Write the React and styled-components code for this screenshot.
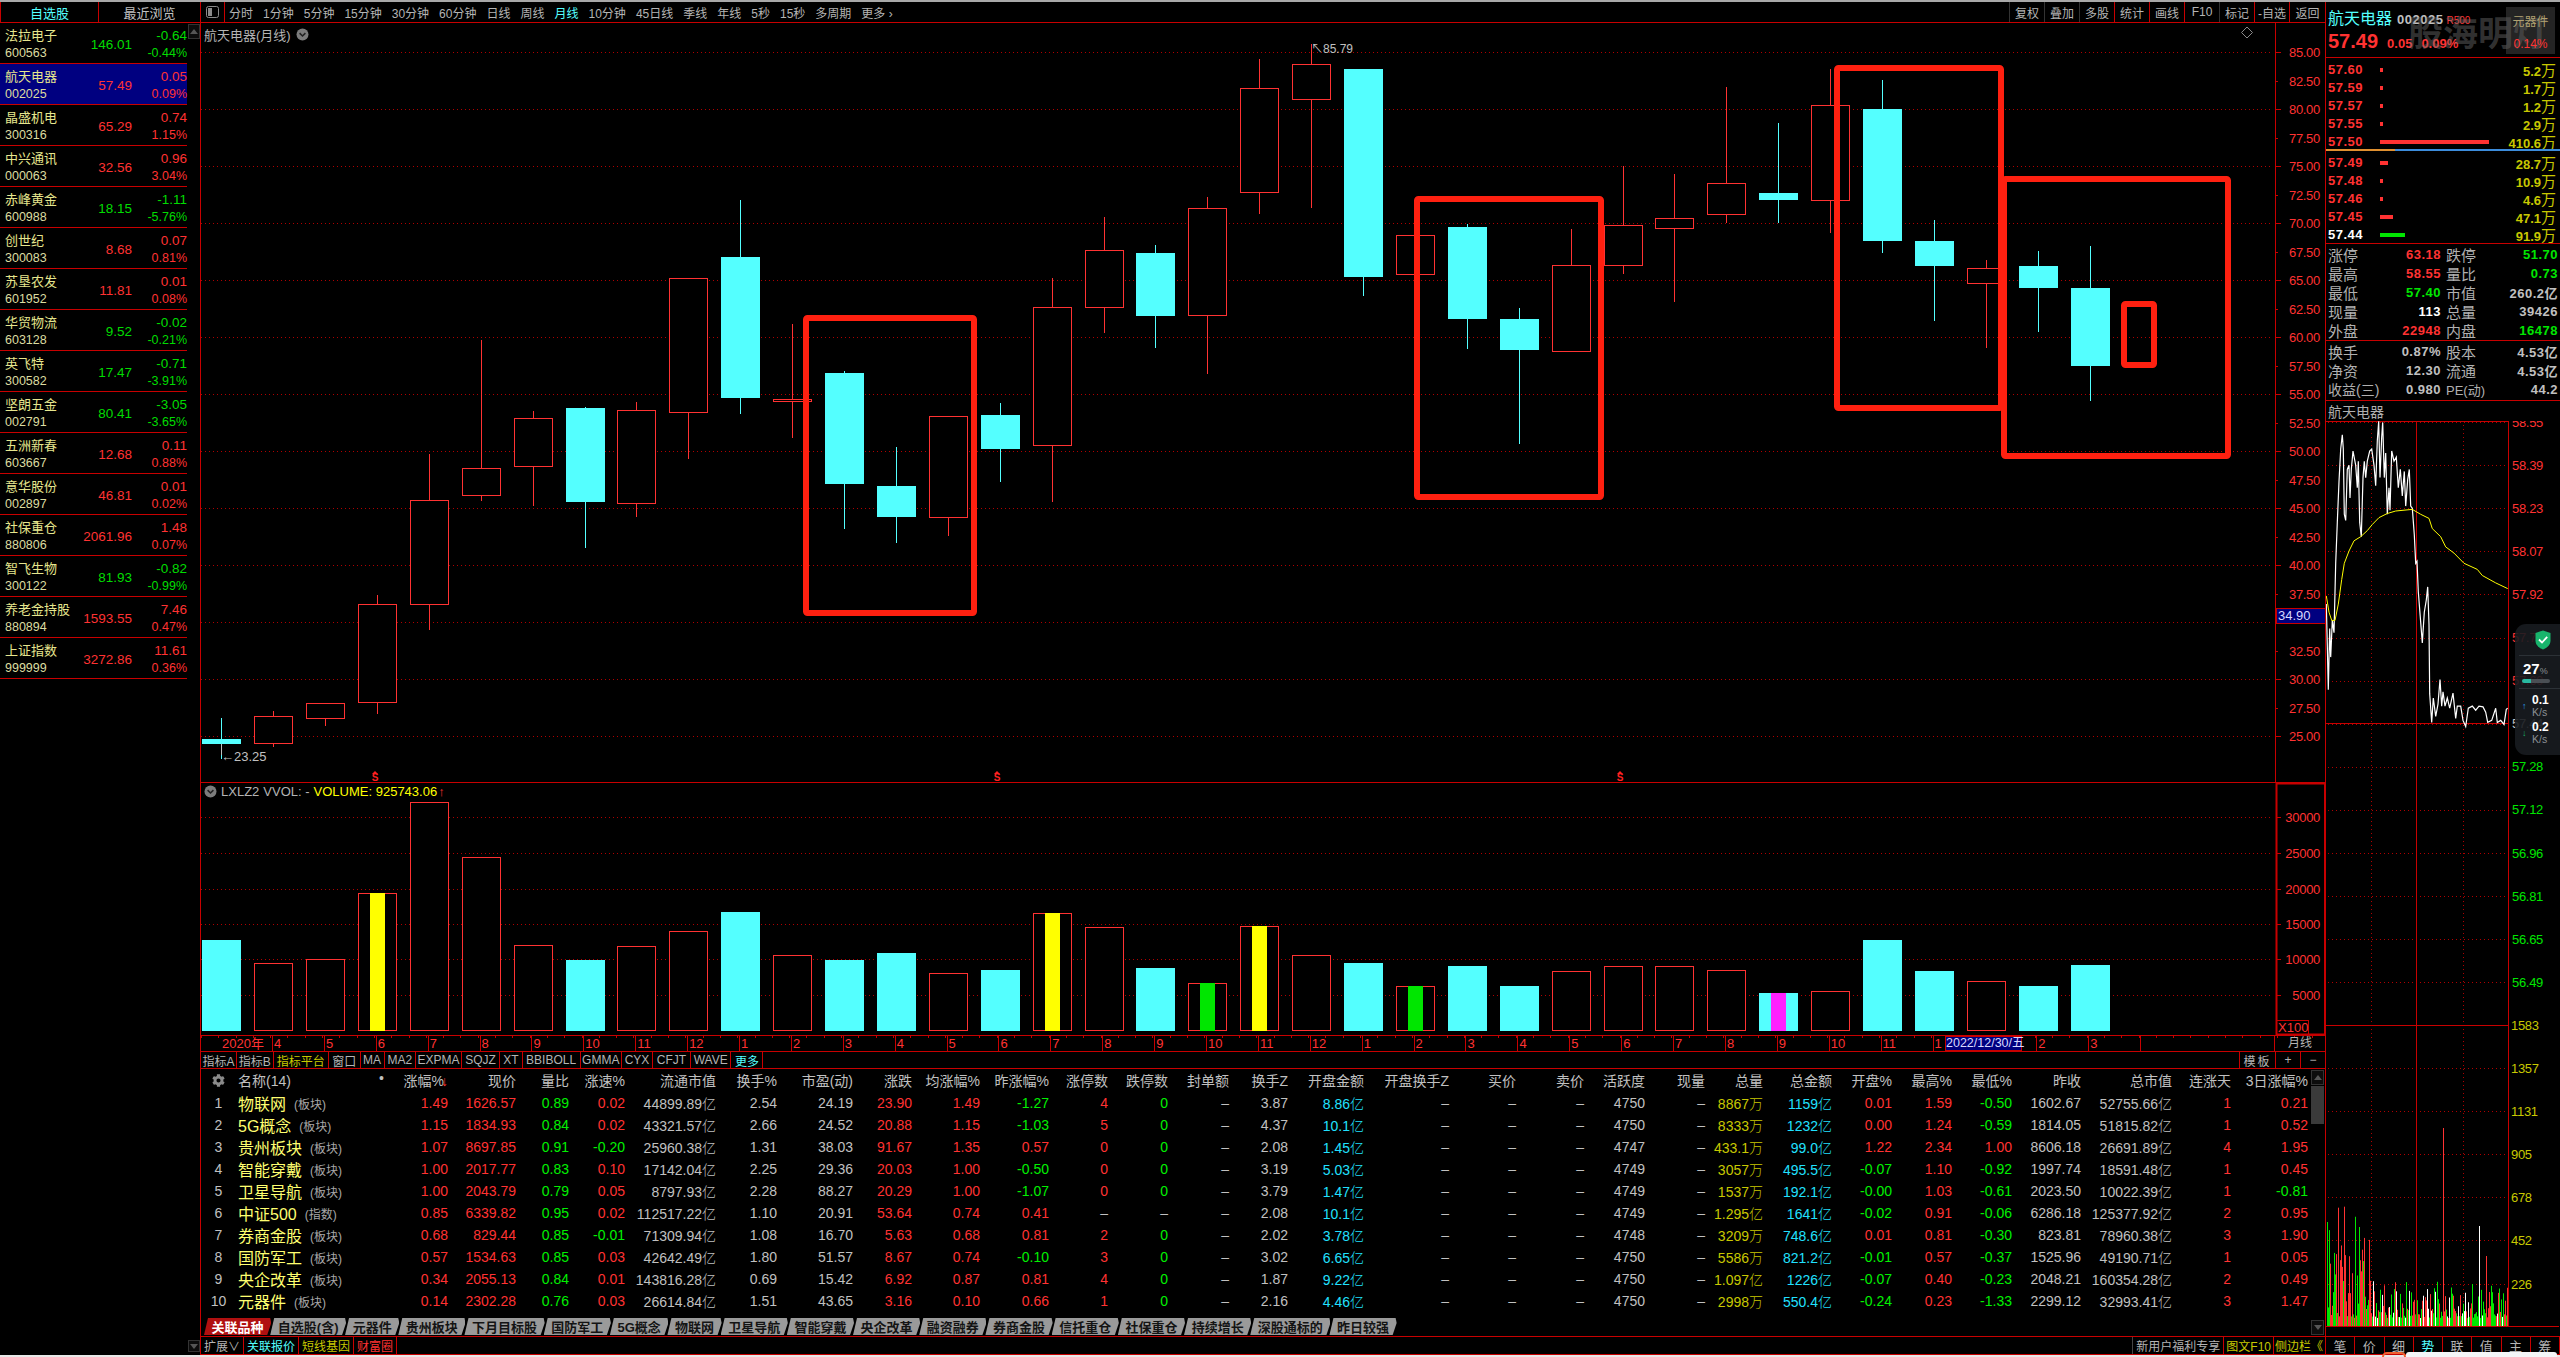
import React from "react";
import styled, { createGlobalStyle } from "styled-components";
import { FaCog } from "react-icons/fa";

const RED = "#ff3232";
const GREEN = "#00e600";
const CYAN = "#54ffff";
const LINE = "#c80000";
const GREY = "#c0c0c0";
const YELLOW = "#c8c800";
const DOT = "#b00000";

const FONT = `"Liberation Sans", "Noto Sans CJK SC", sans-serif`;

const GlobalStyle = createGlobalStyle`
  * { box-sizing: border-box; }
  html, body { margin: 0; padding: 0; background: #000; }
  body { font-family: ${FONT}; color: ${GREY}; }
`;

/* ---------- data ---------- */

const watchList = [
  ["法拉电子", "600563", "146.01", "-0.64", "-0.44%"],
  ["航天电器", "002025", "57.49", "0.05", "0.09%"],
  ["晶盛机电", "300316", "65.29", "0.74", "1.15%"],
  ["中兴通讯", "000063", "32.56", "0.96", "3.04%"],
  ["赤峰黄金", "600988", "18.15", "-1.11", "-5.76%"],
  ["创世纪", "300083", "8.68", "0.07", "0.81%"],
  ["苏垦农发", "601952", "11.81", "0.01", "0.08%"],
  ["华贸物流", "603128", "9.52", "-0.02", "-0.21%"],
  ["英飞特", "300582", "17.47", "-0.71", "-3.91%"],
  ["坚朗五金", "002791", "80.41", "-3.05", "-3.65%"],
  ["五洲新春", "603667", "12.68", "0.11", "0.88%"],
  ["意华股份", "002897", "46.81", "0.01", "0.02%"],
  ["社保重仓", "880806", "2061.96", "1.48", "0.07%"],
  ["智飞生物", "300122", "81.93", "-0.82", "-0.99%"],
  ["养老金持股", "880894", "1593.55", "7.46", "0.47%"],
  ["上证指数", "999999", "3272.86", "11.61", "0.36%"],
];

const periods = [
  ["分时"], ["1分钟"], ["5分钟"], ["15分钟"], ["30分钟"], ["60分钟"], ["日线"], ["周线"], ["月线", true],
  ["10分钟"], ["45日线"], ["季线"], ["年线"], ["5秒"], ["15秒"], ["多周期"], ["更多 ›"],
];

const topTools = [
  ["复权", "#333"], ["叠加", "#333"], ["多股", "#333"], ["统计", LINE], ["画线", LINE],
  ["F10", LINE], ["标记", "#333"], ["-自选", LINE], ["返回", LINE],
];

// wickTop, bodyTop, bodyBottom, wickBottom, falling (px from the top of the window)
const candles = [
  [718, 739, 744, 759, 1], [711, 716, 743, 747, 0], [703, 703, 718, 726, 0], [595, 604, 702, 714, 0],
  [454, 500, 604, 630, 0], [340, 468, 495, 501, 0], [411, 418, 466, 506, 0], [407, 408, 502, 548, 1],
  [402, 410, 503, 517, 0], [278, 278, 412, 459, 0], [200, 257, 398, 414, 1], [324, 399, 400, 438, 0],
  [371, 373, 484, 529, 1], [447, 486, 517, 543, 1], [416, 416, 517, 536, 0], [403, 415, 449, 482, 1],
  [278, 307, 445, 502, 0], [217, 250, 307, 333, 0], [245, 253, 316, 348, 1], [197, 208, 315, 374, 0],
  [59, 88, 192, 214, 0], [44, 64, 99, 208, 0], [69, 69, 277, 296, 1], [215, 235, 274, 332, 0],
  [224, 227, 319, 349, 1], [308, 319, 350, 444, 1], [229, 265, 351, 351, 0], [166, 225, 265, 274, 0],
  [174, 218, 228, 302, 0], [87, 183, 214, 223, 0], [123, 193, 200, 223, 1], [69, 105, 200, 233, 0],
  [80, 109, 241, 253, 1], [220, 241, 266, 321, 1], [260, 268, 283, 348, 0], [251, 266, 288, 332, 1],
  [246, 288, 366, 401, 1],
];

// top of each volume bar, inner colour where the bar carries one
const volumes = [
  [940], [963], [959], [893, "#ffff00"], [802], [857], [945], [960], [946], [931], [912], [955], [960], [953],
  [973], [970], [913, "#ffff00"], [927], [968], [983, "#00e600"], [926, "#ffff00"], [955], [963], [986, "#00e600"],
  [966], [986], [971], [966], [966], [970], [993, "#ff20ff"], [991], [940], [971], [981], [986], [965],
];

const marks = [
  { x: 803, y: 315, w: 174, h: 301 },
  { x: 1414, y: 196, w: 190, h: 304 },
  { x: 1834, y: 65, w: 170, h: 346 },
  { x: 2001, y: 176, w: 230, h: 283 },
  { x: 2121, y: 301, w: 36, h: 67 },
];

// the cursor label lies over the end of "12" and all of the "1" after it
const months = ["4", "5", "6", "7", "8", "9", "10", "11", "12", "1", "2", "3", "4", "5", "6", "7", "8", "9", "10", "11", "12", "1", "2", "3", "4", "5", "6", "7", "8", "9", "10", "11", "1", "", "2", "3"];

const indicatorTools = [
  ["指标A", 36], ["指标B", 36.5], ["指标平台", 55.5, YELLOW], ["窗口", 31.5], ["MA", 24], ["MA2", 31.5], ["EXPMA", 46],
  ["SQJZ", 38], ["XT", 22.6], ["BBIBOLL", 58], ["GMMA", 41.4], ["CYX", 31], ["CFJT", 38], ["WAVE", 40.5], ["更多", 32, CYAN],
];

const columns = [
  [53, "涨幅%", "signed"], [68, "现价", "red"], [53, "量比", "green"], [56, "涨速%", "signed"], [91, "流通市值", "grey"],
  [61, "换手%", "grey"], [76, "市盈(动)", "grey"], [59, "涨跌", "red"], [68, "均涨幅%", "signed"], [69, "昨涨幅%", "signed"],
  [59, "涨停数", "red"], [60, "跌停数", "green"], [61, "封单额", "grey"], [59, "换手Z", "grey"], [76, "开盘金额", "cyan"],
  [85, "开盘换手Z", "grey"], [67, "买价", "grey"], [68, "卖价", "grey"], [61, "活跃度", "grey"], [60, "现量", "grey"],
  [58, "总量", "yellow"], [69, "总金额", "cyan"], [60, "开盘%", "signed"], [60, "最高%", "signed"], [60, "最低%", "signed"],
  [69, "昨收", "grey"], [91, "总市值", "grey"], [59, "连涨天", "red"], [77, "3日涨幅%", "signed"],
];

const tableRows = [
  ["物联网", "(板块)", "1.49 1626.57 0.89 0.02 44899.89亿 2.54 24.19 23.90 1.49 -1.27 4 0 – 3.87 8.86亿 – – – 4750 – 8867万 1159亿 0.01 1.59 -0.50 1602.67 52755.66亿 1 0.21"],
  ["5G概念", "(板块)", "1.15 1834.93 0.84 0.02 43321.57亿 2.66 24.52 20.88 1.15 -1.03 5 0 – 4.37 10.1亿 – – – 4750 – 8333万 1232亿 0.00 1.24 -0.59 1814.05 51815.82亿 1 0.52"],
  ["贵州板块", "(板块)", "1.07 8697.85 0.91 -0.20 25960.38亿 1.31 38.03 91.67 1.35 0.57 0 0 – 2.08 1.45亿 – – – 4747 – 433.1万 99.0亿 1.22 2.34 1.00 8606.18 26691.89亿 4 1.95"],
  ["智能穿戴", "(板块)", "1.00 2017.77 0.83 0.10 17142.04亿 2.25 29.36 20.03 1.00 -0.50 0 0 – 3.19 5.03亿 – – – 4749 – 3057万 495.5亿 -0.07 1.10 -0.92 1997.74 18591.48亿 1 0.45"],
  ["卫星导航", "(板块)", "1.00 2043.79 0.79 0.05 8797.93亿 2.28 88.27 20.29 1.00 -1.07 0 0 – 3.79 1.47亿 – – – 4749 – 1537万 192.1亿 -0.00 1.03 -0.61 2023.50 10022.39亿 1 -0.81"],
  ["中证500", "(指数)", "0.85 6339.82 0.95 0.02 112517.22亿 1.10 20.91 53.64 0.74 0.41 – – – 2.08 10.1亿 – – – 4749 – 1.295亿 1641亿 -0.02 0.91 -0.06 6286.18 125377.92亿 2 0.95"],
  ["券商金股", "(板块)", "0.68 829.44 0.85 -0.01 71309.94亿 1.08 16.70 5.63 0.68 0.81 2 0 – 2.02 3.78亿 – – – 4748 – 3209万 748.6亿 0.01 0.81 -0.30 823.81 78960.38亿 3 1.90"],
  ["国防军工", "(板块)", "0.57 1534.63 0.85 0.03 42642.49亿 1.80 51.57 8.67 0.74 -0.10 3 0 – 3.02 6.65亿 – – – 4750 – 5586万 821.2亿 -0.01 0.57 -0.37 1525.96 49190.71亿 1 0.05"],
  ["央企改革", "(板块)", "0.34 2055.13 0.84 0.01 143816.28亿 0.69 15.42 6.92 0.87 0.81 4 0 – 1.87 9.22亿 – – – 4750 – 1.097亿 1226亿 -0.07 0.40 -0.23 2048.21 160354.28亿 2 0.49"],
  ["元器件", "(板块)", "0.14 2302.28 0.76 0.03 26614.84亿 1.51 43.65 3.16 0.10 0.66 1 0 – 2.16 4.46亿 – – – 4750 – 2998万 550.4亿 -0.24 0.23 -1.33 2299.12 32993.41亿 3 1.47"],
];

const sheetTabs = [
  "自选股(含)", "元器件", "贵州板块", "下月目标股", "国防军工", "5G概念", "物联网", "卫星导航", "智能穿戴", "央企改革",
  "融资融券", "券商金股", "信托重仓", "社保重仓", "持续增长", "深股通标的", "昨日较强",
];

const asks = [
  ["57.60", 3, "5.2"], ["57.59", 3, "1.7"], ["57.57", 3, "1.2"], ["57.55", 3, "2.9"], ["57.50", 109, "410.6"],
];
const bids = [
  ["57.49", 8, "28.7"], ["57.48", 3, "10.9"], ["57.46", 3, "4.6"], ["57.45", 13, "47.1"], ["57.44", 25, "91.9", true],
];

const stats = [
  ["涨停", "63.18", RED, "跌停", "51.70", GREEN],
  ["最高", "58.55", RED, "量比", "0.73", GREEN],
  ["最低", "57.40", GREEN, "市值", "260.2亿", GREY],
  ["现量", "113", "#fff", "总量", "39426", GREY],
  ["外盘", "22948", RED, "内盘", "16478", GREEN],
];
const info = [
  ["换手", "0.87%", "股本", "4.53亿"],
  ["净资", "12.30", "流通", "4.53亿"],
  ["收益(三)", "0.980", "PE(动)", "44.2"],
];

const intradayPrice = "262,500 265,600 268,710 272,560 275,630 280,540 285,570 290,400 295,300 300,200 305,120 310,85 313,120 316,280 320,295 325,170 330,160 333,240 337,170 342,125 350,160 355,215 358,150 362,300 367,335 372,190 376,150 380,190 385,150 392,125 398,120 405,160 410,210 415,100 419,52 423,190 428,90 431,55 436,190 440,130 445,280 450,215 453,270 458,125 465,150 472,140 478,215 484,170 490,235 496,175 500,260 506,195 511,170 515,260 520,265 526,330 530,400 534,395 538,470 545,545 550,595 556,520 562,490 566,458 570,550 572,720 578,790 583,730 590,775 597,745 603,685 608,750 612,715 618,750 625,730 632,755 642,718 650,780 655,750 665,750 672,785 680,800 688,755 700,750 710,760 720,750 732,752 740,765 746,790 758,785 770,755 775,790 785,785 795,795 802,758 806,755";
const intradayAverage = "262,480 270,520 278,540 288,540 298,500 308,440 316,400 330,370 345,345 365,335 385,320 400,305 420,288 445,278 470,272 495,270 520,268 545,280 570,290 580,315 605,335 620,360 645,375 675,400 715,415 730,430 770,448 806,462";

// the crop the two intraday traces were measured on was stretched 3 by 2.45
const toPagePoints = (points) =>
  points
    .split(" ")
    .map((p) => {
      const [x, y] = p.split(",").map(Number);
      return `${(2240 + x / 3).toFixed(1)},${(400 + y / 2.45).toFixed(1)}`;
    })
    .join(" ");

// pseudo random tick volumes, the same on every render
const tickVolumes = (() => {
  const bars = [];
  let seed = 17;
  for (let x = 2328; x < 2509; x += 1) {
    seed = (seed * 1103515245 + 12345) % 2147483648;
    const r = seed / 2147483648;
    seed = (seed * 1103515245 + 12345) % 2147483648;
    const pick = seed / 2147483648;
    const early = x < 2372 ? 1 : 0.45;
    const h = 8 + r * r * 82 * early + (x < 2360 ? r * 30 : 0);
    bars.push({ x, h, color: pick < 0.42 ? "#00e600" : pick < 0.78 ? RED : x > 2372 ? "#fff" : RED });
  }
  bars.push({ x: 2444, h: 198, color: RED }, { x: 2480, h: 100, color: "#fff" }, { x: 2360, h: 99, color: "#00e600" }, { x: 2328, h: 104, color: "#00e600" }, { x: 2417, h: 78, color: "#00e600" }, { x: 2487, h: 70, color: RED });
  return bars;
})();

const crisp = (v) => Math.round(v) + 0.5;
const candleX = (i) => 221.2 + i * 51.9;

/* ---------- shell ---------- */

const Page = styled.div`
  position: relative;
  width: 2560px;
  height: 1357px;
  overflow: hidden;
  background: #000;
  font-size: 12px;
`;

const TopStrip = styled.div`
  height: 2px;
  background: #a8a8a8;
`;

const BottomStrip = styled.div`
  height: 2px;
  background: #e8e8e8;
`;

const Columns = styled.div`
  display: flex;
  height: 1353px;
`;

/* ---------- watch list ---------- */

const LeftColumn = styled.div`
  flex: 0 0 200px;
  display: flex;
  flex-direction: column;
`;

const ListTabs = styled.div`
  display: flex;
  height: 21px;
  border-bottom: 1px solid ${LINE};
`;

const ListTab = styled.div`
  flex: ${(p) => (p.$on ? "0 0 99px" : "1")};
  display: flex;
  align-items: center;
  justify-content: center;
  font-size: 13px;
  color: ${(p) => (p.$on ? CYAN : GREY)};
  border-left: ${(p) => (p.$on ? `1px solid ${LINE}` : "none")};
  border-right: ${(p) => (p.$on ? `1px solid ${LINE}` : "none")};
`;

const ListBody = styled.div`
  flex: 1;
  display: flex;
`;

const ListRows = styled.div`
  flex: 0 0 186px;
`;

const Gutter = styled.div`
  flex: 1;
  display: flex;
  flex-direction: column;
  justify-content: space-between;
  padding: 1px 0 3px 1px;
`;

const ArrowButton = styled.div`
  display: flex;
  align-items: center;
  justify-content: center;
  height: ${(p) => p.$h || 15}px;
  border: 1px solid #333;
  background: #0c0c0c;
  &::after {
    content: "";
    border-left: 4px solid transparent;
    border-right: 4px solid transparent;
    border-${(p) => (p.$down ? "top" : "bottom")}: 5px solid #555;
  }
`;

const ListRow = styled.div`
  display: grid;
  grid-template-columns: 78px 49px 55px;
  height: 41px;
  padding-left: 5px;
  background: ${(p) => (p.$on ? "#000080" : "transparent")};
  border-bottom: 1px solid ${LINE};
`;

const NameStack = styled.div`
  display: flex;
  flex-direction: column;
  white-space: nowrap;
  padding-top: 3px;
`;

const StockName = styled.span`
  font-size: 13px;
  line-height: 19px;
  color: #e6e68e;
`;

const StockCode = styled.span`
  font-size: 12.5px;
  line-height: 17px;
  color: #dcdca0;
`;

const ListPrice = styled.div`
  display: flex;
  align-items: center;
  justify-content: flex-end;
  padding-top: 2px;
  font-size: 13.5px;
  white-space: nowrap;
  color: ${(p) => p.$color};
`;

const ChangeStack = styled.div`
  display: flex;
  flex-direction: column;
  align-items: flex-end;
  padding-top: 3px;
  color: ${(p) => p.$color};
`;

const ChangeValue = styled.span`
  font-size: 13.5px;
  line-height: 19px;
`;

const ChangePct = styled.span`
  font-size: 12.5px;
  line-height: 17px;
`;

/* ---------- centre ---------- */

const CenterColumn = styled.div`
  flex: 0 0 2126px;
  display: flex;
  flex-direction: column;
  border-left: 1px solid ${LINE};
  border-right: 1px solid ${LINE};
`;

const TopBar = styled.div`
  display: flex;
  align-items: center;
  height: 21px;
  border-bottom: 1px solid ${LINE};
`;

const PanelToggle = styled.div`
  flex: 0 0 24px;
  height: 100%;
  display: flex;
  align-items: center;
  justify-content: center;
  border-right: 1px solid ${LINE};
`;

const PeriodList = styled.div`
  display: flex;
  gap: 10px;
  padding-left: 4px;
  flex: 1;
`;

const Period = styled.span`
  white-space: nowrap;
  color: ${(p) => (p.$on ? CYAN : "#b4b4b4")};
`;

const ToolCell = styled.div`
  flex: 0 0 ${(p) => p.$w || 35}px;
  height: 100%;
  display: flex;
  align-items: center;
  justify-content: center;
  border-left: 1px solid ${(p) => p.$line};
  color: #b4b4b4;
  white-space: nowrap;
`;

const ChartPanel = styled.div`
  position: relative;
  height: ${(p) => p.$h}px;
  border-top: ${(p) => (p.$ruled ? `1px solid ${LINE}` : "none")};
`;

const ChartSvg = styled.svg`
  display: block;
  font-family: ${FONT};
`;

const ChartTitle = styled.div`
  position: absolute;
  left: 3px;
  top: ${(p) => p.$top}px;
  display: flex;
  align-items: center;
  gap: ${(p) => p.$gap || 5}px;
  font-size: 13px;
  color: #b4b4b4;
  white-space: nowrap;
`;

const LegendValue = styled.span`
  color: #ffff00;
`;

const LegendArrow = styled.span`
  margin-left: -3px;
  color: ${RED};
  font-weight: 700;
`;

const DateRow = styled.div`
  position: relative;
  display: flex;
  height: 16px;
  border-top: 1px solid ${LINE};
  background: repeating-linear-gradient(90deg, ${LINE} 0 1px, transparent 1px 17.3px) 0 0 / 100% 2px no-repeat;
`;

const DateCells = styled.div`
  flex: 1;
  display: flex;
  overflow: hidden;
`;

const DateCell = styled.div`
  flex: 0 0 ${(p) => p.$w}px;
  padding-left: ${(p) => p.$pad}px;
  font-size: 13px;
  line-height: 15px;
  color: ${RED};
  white-space: nowrap;
  border-right: 1px solid ${LINE};
`;

const PeriodCell = styled.div`
  flex: 0 0 51px;
  text-align: center;
  line-height: 15px;
  border-left: 1px solid ${LINE};
  color: #b4b4b4;
`;

const DateCursor = styled.div`
  position: absolute;
  left: 1744px;
  top: 0;
  width: 77px;
  height: 15px;
  background: #000080;
  border: 1px solid ${LINE};
  line-height: 13px;
  font-size: 12.5px;
  text-align: center;
  color: #d8d8ff;
  white-space: nowrap;
`;

const ToolsRow = styled.div`
  display: flex;
  height: 17px;
  border-top: 1px solid ${LINE};
`;

const ToolButton = styled.div`
  flex: 0 0 ${(p) => p.$w}px;
  display: flex;
  align-items: center;
  justify-content: center;
  white-space: nowrap;
  overflow: hidden;
  color: ${(p) => p.$color || "#b4b4b4"};
  border-right: 1px solid ${LINE};
`;

const ToolFill = styled.div`
  flex: 1;
`;

const TemplateCell = styled.div`
  flex: 0 0 ${(p) => p.$w}px;
  display: flex;
  align-items: center;
  justify-content: center;
  letter-spacing: ${(p) => p.$spread || 0}px;
  color: #b4b4b4;
  border-left: 1px solid ${LINE};
`;

/* ---------- table ---------- */

const TableArea = styled.div`
  display: flex;
  height: 268px;
  border-top: 1px solid ${LINE};
`;

const TableStack = styled.div`
  flex: 1;
  display: flex;
  flex-direction: column;
  min-width: 0;
`;

const TableBody = styled.div`
  flex: 1;
`;

const TableRow = styled.div`
  display: grid;
  grid-template-columns: 31px 163px ${columns.map((c) => `${c[0]}px`).join(" ")};
  height: 22px;
  align-items: center;
  font-size: 14px;
  white-space: nowrap;
`;

const HeadCell = styled.div`
  text-align: right;
  color: ${GREY};
`;

const GearCell = styled.div`
  display: flex;
  justify-content: center;
  color: #8a8a8a;
  font-size: 13px;
  padding-left: 4px;
`;

const NameHead = styled.div`
  display: flex;
  justify-content: space-between;
  padding: 0 11px 0 6px;
  color: ${GREY};
`;

const RowIndex = styled.div`
  text-align: center;
  padding-left: 4px;
  color: ${GREY};
`;

const SectorCell = styled.div`
  display: flex;
  align-items: center;
  gap: 8px;
  padding-left: 6px;
`;

const SectorName = styled.span`
  font-size: 16px;
  color: #ffff70;
`;

const SectorTag = styled.span`
  font-size: 12px;
  color: #a8a8a8;
`;

const cellColors = { red: RED, green: "#00f000", grey: GREY, cyan: "#20e0ff", yellow: YELLOW };

const DataCell = styled.div`
  text-align: right;
  color: ${(p) => p.$color};
`;

const Unit = styled.span`
  font-size: 14px;
  font-weight: 300;
`;

const ScrollBar = styled.div`
  flex: 0 0 17px;
  display: flex;
  flex-direction: column;
  padding: 1px 1px 1px 3px;
  gap: 1px;
`;

const ScrollTrack = styled.div`
  flex: 1;
`;

const ScrollThumb = styled.div`
  height: 38px;
  background: #3a3a3a;
`;

const SheetTabs = styled.div`
  display: flex;
  height: 18px;
  padding: 0 0 1px 3px;
  align-items: stretch;
`;

const SheetTab = styled.div`
  flex: none;
  display: flex;
  align-items: center;
  padding: 0 7.6px;
  margin-right: -1px;
  font-size: 13px;
  font-weight: 700;
  white-space: nowrap;
  background: ${(p) => (p.$on ? "#b01010" : "#9a9a9a")};
  color: ${(p) => (p.$on ? "#fff" : "#141414")};
  clip-path: polygon(4px 0, calc(100% - 1px) 0, 100% 30%, calc(100% - 4px) 100%, 0 100%);
`;

const BottomBar = styled.div`
  display: flex;
  align-items: stretch;
  height: 19px;
  border-top: 1px solid ${LINE};
  border-bottom: 1px solid ${LINE};
`;

const BottomItem = styled.div`
  display: flex;
  align-items: center;
  padding: 0 ${(p) => p.$pad ?? 3}px;
  white-space: nowrap;
  color: ${(p) => p.$color || "#b4b4b4"};
  border-right: 1px solid ${(p) => p.$line || LINE};
  border-left: ${(p) => (p.$ruleLeft ? `1px solid #444` : "none")};
`;

const BottomFill = styled.div`
  flex: 1;
`;

/* ---------- right column ---------- */

const RightColumn = styled.div`
  position: relative;
  flex: 1;
  display: flex;
  flex-direction: column;
  min-width: 0;
`;

const QuoteHead = styled.div`
  position: relative;
  height: 56px;
  padding: 3px 3px 0 2px;
  border-bottom: 1px solid ${LINE};
`;

const QuoteLine = styled.div`
  display: flex;
  align-items: baseline;
  height: ${(p) => p.$h}px;
  white-space: nowrap;
`;

const QuoteName = styled.span`
  font-size: 16px;
  color: ${CYAN};
  margin-right: 5px;
`;

const QuoteCode = styled.span`
  font-size: 13px;
  font-weight: 700;
  letter-spacing: 0.5px;
  color: ${GREY};
`;

const QuoteFlag = styled.span`
  margin-left: 3px;
  font-size: 10px;
  color: ${RED};
`;

const BigPrice = styled.span`
  font-size: 20px;
  font-weight: 700;
  color: ${RED};
  margin-right: 9px;
`;

const QuoteChange = styled.span`
  font-size: 13px;
  font-weight: 700;
  color: ${RED};
  margin-right: 9px;
`;

const WatermarkBox = styled.div`
  position: absolute;
  right: 5px;
  top: 5px;
  width: 49px;
  height: 47px;
  background: rgba(90, 90, 90, 0.4);
  text-align: center;
  color: #b0a070;
  padding-top: 5px;
`;

const WatermarkPct = styled.div`
  margin-top: 8px;
  font-size: 12px;
  color: ${RED};
`;

const Watermark = styled.div`
  position: absolute;
  left: 82px;
  top: 11px;
  font-size: 35px;
  line-height: 42px;
  font-weight: 700;
  color: rgba(120, 120, 120, 0.42);
  white-space: nowrap;
`;

const BookSection = styled.div`
  height: ${(p) => p.$h}px;
  padding-top: 1px;
  border-bottom: ${(p) => (p.$ruled ? `1px solid ${LINE}` : "none")};
`;

const BookRow = styled.div`
  display: grid;
  grid-template-columns: 52px 1fr auto;
  align-items: center;
  height: 18px;
  padding: 0 4px 0 2px;
`;

const BookPrice = styled.span`
  font-size: 13px;
  font-weight: 700;
  letter-spacing: 0.5px;
  color: ${(p) => (p.$white ? "#fff" : RED)};
`;

const BookBar = styled.span`
  display: block;
  height: 4px;
  background: ${(p) => (p.$white ? GREEN : RED)};
`;

const BookAmount = styled.span`
  font-size: 13px;
  font-weight: 700;
  color: ${YELLOW};
  white-space: nowrap;
`;

const BookUnit = styled.span`
  font-size: 15px;
  font-weight: 400;
  margin-left: 0;
`;

const BookDivider = styled.div`
  height: 2px;
  background: linear-gradient(90deg, #e09030 0 69px, #3c8cdc 69px);
`;

const StatSection = styled.div`
  height: ${(p) => p.$h}px;
  border-bottom: 1px solid ${LINE};
`;

const StatRow = styled.div`
  display: grid;
  grid-template-columns: 113px 1fr;
  column-gap: 5px;
  height: 19px;
  padding-left: 2px;
  padding-right: 2px;
`;

const StatPair = styled.div`
  display: flex;
  justify-content: space-between;
  align-items: center;
  white-space: nowrap;
`;

const StatLabel = styled.span`
  font-size: ${(p) => p.$size || 15}px;
  color: #b0b0b0;
`;

const StatValue = styled.span`
  font-size: 13px;
  font-weight: 700;
  letter-spacing: 0.5px;
  color: ${(p) => p.$color || GREY};
`;

const IntradayTitle = styled.div`
  height: 20px;
  padding-left: 2px;
  font-size: 14px;
  line-height: 22px;
  color: #b0b0b0;
`;

const SideTabs = styled.div`
  display: flex;
  height: 19px;
  border-top: 1px solid ${LINE};
  border-bottom: 1px solid ${LINE};
`;

const SideTab = styled.div`
  flex: 1;
  display: flex;
  align-items: center;
  justify-content: center;
  font-size: 13px;
  color: ${(p) => (p.$on ? CYAN : "#b4b4b4")};
  border-right: 1px solid ${LINE};
`;

/* ---------- floating monitor widget ---------- */

const Monitor = styled.div`
  position: absolute;
  left: 189px;
  top: 622px;
  width: 50px;
  height: 131px;
  border-radius: 11px 0 0 11px;
  background: rgba(24, 28, 32, 0.9);
  padding: 6px 2px 0 7px;
  color: #fff;
`;

const MonitorRule = styled.div`
  height: 1px;
  background: #2c3136;
  margin: ${(p) => p.$gap}px 0 0 -3px;
`;

const ShieldWrap = styled.div`
  display: flex;
  justify-content: center;
  height: 22px;
`;

const Percent = styled.div`
  margin: 6px 0 0 1px;
  font-size: 15px;
  line-height: 14px;
  font-weight: 700;
  white-space: nowrap;
`;

const PercentSign = styled.span`
  font-size: 9px;
  color: #8a8f94;
  font-weight: 400;
`;

const Meter = styled.div`
  height: 4px;
  width: 28px;
  margin-top: 1px;
  border-radius: 2px;
  background: linear-gradient(90deg, #28b8a0 0 9px, #4a4f54 9px);
`;

const SpeedRow = styled.div`
  display: grid;
  grid-template-columns: 10px 1fr;
  align-items: center;
  margin-top: ${(p) => p.$top}px;
`;

const SpeedArrow = styled.span`
  font-size: 9px;
  color: ${(p) => p.$color};
`;

const SpeedValue = styled.div`
  display: flex;
  flex-direction: column;
  font-size: 12px;
  line-height: 12px;
  font-weight: 700;
`;

const SpeedUnit = styled.span`
  font-weight: 400;
  font-size: 10.5px;
  color: #8a8f94;
`;

/* ---------- bits of page furniture ---------- */

const ToastArc = styled.div`
  position: absolute;
  right: 3px;
  bottom: 0;
  width: 151px;
  height: 5px;
  background: #f4f6f8;
  border-radius: 3px 3px 0 0;
`;

const ToastMark = styled.div`
  position: absolute;
  right: 154px;
  bottom: 0;
  width: 24px;
  height: 5px;
  border: 2px solid #f06030;
  border-bottom: none;
  border-radius: 12px 12px 0 0;
`;

const PanelIcon = ({ right }) => (
  <svg width="13" height="12" viewBox="0 0 13 12">
    <rect x="0.5" y="0.5" width="12" height="11" rx="2" fill="none" stroke="#8a8a8a" />
    <rect x={right ? 7 : 2} y="2" width="4" height="8" fill="#8a8a8a" />
  </svg>
);

const MenuDot = () => (
  <svg width="13" height="13" viewBox="0 0 13 13">
    <circle cx="6.5" cy="6.5" r="6" fill="#7c7c7c" />
    <path d="M3.6 5.2 6.5 8 9.4 5.2" fill="none" stroke="#222" strokeWidth="1.6" />
  </svg>
);

const Shield = () => (
  <svg width="16" height="20" viewBox="0 0 16 20">
    <path d="M8 0.5 15.5 3v7.5c0 4.2-3.2 7.4-7.5 9-4.3-1.6-7.5-4.8-7.5-9V3z" fill="#18b46c" />
    <path d="M4 9.5 7 12.5 12.2 6.8" fill="none" stroke="#fff" strokeWidth="1.8" />
  </svg>
);

/* ---------- charts ---------- */

const DottedRow = ({ y, x1 = 201, x2 = 2273 }) => (
  <line x1={x1} x2={x2} y1={crisp(y)} y2={crisp(y)} stroke={DOT} strokeDasharray="1 3" />
);

const AxisLabel = ({ y, children, color = RED, x = 2320, anchor = "end" }) => (
  <text x={x} y={y + 4.5} fill={color} fontSize="13" letterSpacing="-0.3" textAnchor={anchor}>
    {children}
  </text>
);

const Candle = ({ data, index }) => {
  const [wickTop, top, bottom, wickBottom, falling] = data;
  const cx = crisp(candleX(index));
  const color = falling ? CYAN : RED;
  return (
    <g>
      {wickTop < top && <line x1={cx} x2={cx} y1={wickTop} y2={top} stroke={color} />}
      {wickBottom > bottom && <line x1={cx} x2={cx} y1={bottom} y2={wickBottom} stroke={color} />}
      {falling ? (
        <rect x={cx - 19.5} y={top} width={39} height={Math.max(bottom - top, 1)} fill={CYAN} />
      ) : (
        <rect x={cx - 19} y={crisp(top)} width={38} height={Math.max(bottom - top, 2)} fill="#000" stroke={RED} />
      )}
    </g>
  );
};

const SignalMark = ({ x }) => (
  <g>
    <path d={`M${x - 3} 774 L${x} 771 L${x + 3} 774 Z`} fill="#ff2020" />
    <text x={x} y={781} fill="#ff2020" fontSize="10" fontWeight="700" textAnchor="middle">
      S
    </text>
  </g>
);

const PriceChart = () => {
  const axisY = (v) => 52.3 + ((85 - v) / 5) * 57;
  const major = Array.from({ length: 13 }, (_, i) => 85 - i * 5);
  const minor = major.slice(0, 12).map((v) => v - 2.5);
  return (
    <ChartSvg width="2124" height="759" viewBox="201 23 2124 759">
      {major.map((v) => (
        <DottedRow key={v} y={axisY(v)} />
      ))}
      {candles.map((c, i) => (
        <Candle key={i} data={c} index={i} />
      ))}
      <line x1={221.5} x2={221.5} y1={744} y2={755} stroke={GREY} />
      <text x={221} y={761} fill={GREY} fontSize="13">
        ←23.25
      </text>
      <text x={1311} y={53} fill={GREY} fontSize="12">
        ↖85.79
      </text>
      {marks.map((m) => (
        <rect key={m.x} x={m.x + 3} y={m.y + 3} width={m.w - 6} height={m.h - 6} rx="1.5" fill="none" stroke="#ff2010" strokeWidth="6" />
      ))}
      {[375, 997, 1620].map((x) => (
        <SignalMark key={x} x={x} />
      ))}
      <line x1={2275.5} x2={2275.5} y1={23} y2={782} stroke={LINE} />
      {major.map((v) => (
        <g key={v}>
          <line x1={2275} x2={2281} y1={crisp(axisY(v))} y2={crisp(axisY(v))} stroke={LINE} />
          {v !== 35 && <AxisLabel y={axisY(v)}>{v.toFixed(2)}</AxisLabel>}
        </g>
      ))}
      {minor.map((v) => (
        <g key={v}>
          <line x1={2275} x2={2278} y1={crisp(axisY(v))} y2={crisp(axisY(v))} stroke={LINE} />
          <AxisLabel y={axisY(v) + 1}>{v.toFixed(2)}</AxisLabel>
        </g>
      ))}
      <rect x={2276.5} y={608.5} width={49} height={15} fill="#000080" stroke={LINE} />
      <text x={2278} y={620} fill="#d8d8ff" fontSize="13">
        34.90
      </text>
      <path d="M2247 27 L2252.5 32.5 L2247 38 L2241.5 32.5 Z" fill="none" stroke="#8a8a8a" />
    </ChartSvg>
  );
};

const VolumeChart = () => {
  const levels = [
    [817, 30000],
    [853, 25000],
    [889, 20000],
    [924, 15000],
    [959, 10000],
    [995, 5000],
  ];
  return (
    <ChartSvg width="2124" height="252" viewBox="201 783 2124 252">
      {levels.map(([y]) => (
        <DottedRow key={y} y={y} />
      ))}
      {volumes.map(([top, inner], i) => {
        const cx = crisp(candleX(i));
        const falling = candles[i][4];
        return (
          <g key={i}>
            {falling ? (
              <rect x={cx - 19.5} y={top} width={39} height={1031 - top} fill={CYAN} />
            ) : (
              <rect x={cx - 19} y={crisp(top)} width={38} height={1030 - top} fill="#000" stroke={RED} />
            )}
            {inner && <rect x={cx - 7.5} y={top} width={15} height={1031 - top} fill={inner} />}
          </g>
        );
      })}
      <rect x={2276.5} y={783.5} width={48.5} height={251} fill="none" stroke={LINE} strokeWidth="2" />
      {levels.map(([y, v]) => (
        <g key={v}>
          <line x1={2276} x2={2281} y1={crisp(y)} y2={crisp(y)} stroke={LINE} />
          <AxisLabel y={y}>{v}</AxisLabel>
        </g>
      ))}
      <rect x={2276.5} y={1020.5} width={32} height={14} fill="none" stroke={LINE} />
      <text x={2278} y={1032} fill={RED} fontSize="13">
        X100
      </text>
    </ChartSvg>
  );
};

const IntradayChart = () => {
  const priceRows = [
    ["58.55", RED], ["58.39", RED], ["58.23", RED], ["58.07", RED], ["57.92", RED], ["57.76", RED], ["57.60", RED],
    ["57.44", GREY], ["57.28", GREEN], ["57.12", GREEN], ["56.96", GREEN], ["56.81", GREEN], ["56.65", GREEN], ["56.49", GREEN],
  ];
  const volumeRows = [["1357", 1068], ["1131", 1111], ["905", 1154], ["678", 1197], ["452", 1240], ["226", 1284]];
  return (
    <ChartSvg width="233" height="915" viewBox="2327 421 233 915">
      {priceRows.map(([label], i) => (
        <DottedRow key={label} y={422 + i * 43.1} x1={2329} x2={2509} />
      ))}
      {volumeRows.map(([label, y]) => (
        <DottedRow key={label} y={y} x1={2329} x2={2509} />
      ))}
      <line x1={2372.5} x2={2372.5} y1={421} y2={1326} stroke={DOT} strokeDasharray="1 3" />
      <line x1={2464.5} x2={2464.5} y1={421} y2={1326} stroke={DOT} strokeDasharray="1 3" />
      {tickVolumes.map((b, i) => (
        <line key={i} x1={b.x + 0.5} x2={b.x + 0.5} y1={1326 - b.h} y2={1326} stroke={b.color} />
      ))}
      <line x1={2417.5} x2={2417.5} y1={421} y2={1326} stroke={LINE} />
      <line x1={2327} x2={2509} y1={421.5} y2={421.5} stroke={LINE} />
      <line x1={2327} x2={2509} y1={723.5} y2={723.5} stroke={LINE} />
      <line x1={2327} x2={2509} y1={1025.5} y2={1025.5} stroke={LINE} />
      <line x1={2327} x2={2560} y1={1326.5} y2={1326.5} stroke={LINE} />
      <line x1={2509.5} x2={2509.5} y1={421} y2={1326} stroke={LINE} />
      <polyline points={toPagePoints(intradayPrice)} fill="none" stroke="#fff" strokeWidth="1.2" />
      <polyline points={toPagePoints(intradayAverage)} fill="none" stroke="#ffff00" strokeWidth="1" />
      {priceRows.map(([label, color], i) => (
        <AxisLabel key={label} y={422 + i * 43.1} color={color} x={2513} anchor="start">
          {label}
        </AxisLabel>
      ))}
      <AxisLabel y={1025} color={YELLOW} x={2512} anchor="start">
        1583
      </AxisLabel>
      {volumeRows.map(([label, y]) => (
        <AxisLabel key={label} y={y} color={YELLOW} x={2512} anchor="start">
          {label}
        </AxisLabel>
      ))}
    </ChartSvg>
  );
};

/* ---------- sections ---------- */

const WatchList = () => (
  <LeftColumn>
    <ListTabs>
      <ListTab $on>自选股</ListTab>
      <ListTab>最近浏览</ListTab>
    </ListTabs>
    <ListBody>
      <ListRows>
        {watchList.map(([name, code, price, change, pct]) => {
          const color = change.startsWith("-") ? "#00dc00" : RED;
          return (
            <ListRow key={code} $on={code === "002025"}>
              <NameStack>
                <StockName>{name}</StockName>
                <StockCode>{code}</StockCode>
              </NameStack>
              <ListPrice $color={color}>{price}</ListPrice>
              <ChangeStack $color={color}>
                <ChangeValue>{change}</ChangeValue>
                <ChangePct>{pct}</ChangePct>
              </ChangeStack>
            </ListRow>
          );
        })}
      </ListRows>
      <Gutter>
        <ArrowButton />
        <ArrowButton $down $h={12} />
      </Gutter>
    </ListBody>
  </LeftColumn>
);

const SectorTable = () => (
  <TableBody>
    <TableRow>
      <GearCell>
        <FaCog />
      </GearCell>
      <NameHead>
        <span>名称(14)</span>
        <span>•</span>
      </NameHead>
      {columns.map(([, label], i) => (
        <HeadCell key={label}>
          {label}
          {i === 0 && <LegendArrow>↓</LegendArrow>}
        </HeadCell>
      ))}
    </TableRow>
    {tableRows.map(([name, tag, values], r) => (
      <TableRow key={name}>
        <RowIndex>{r + 1}</RowIndex>
        <SectorCell>
          <SectorName>{name}</SectorName>
          <SectorTag>{tag}</SectorTag>
        </SectorCell>
        {values.split(" ").map((value, c) => {
          const kind = columns[c][2];
          const unit = /[亿万]$/.test(value) ? value.slice(-1) : "";
          let color = cellColors[kind] || (value.startsWith("-") ? "#00f000" : RED);
          if (value === "–") color = GREY;
          return (
            <DataCell key={c} $color={color}>
              {unit ? value.slice(0, -1) : value}
              {unit && <Unit>{unit}</Unit>}
            </DataCell>
          );
        })}
      </TableRow>
    ))}
  </TableBody>
);

const OrderRow = ({ price, size, amount, white }) => (
  <BookRow>
    <BookPrice $white={white}>{price}</BookPrice>
    <BookBar $white={white} style={{ width: size }} />
    <BookAmount>
      {amount}
      <BookUnit>万</BookUnit>
    </BookAmount>
  </BookRow>
);

const QuotePanel = () => (
  <RightColumn>
    <QuoteHead>
      <Watermark>股海明灯</Watermark>
      <QuoteLine $h={25}>
        <QuoteName>航天电器</QuoteName>
        <QuoteCode>002025</QuoteCode>
        <QuoteFlag>R500</QuoteFlag>
      </QuoteLine>
      <QuoteLine $h={26}>
        <BigPrice>57.49</BigPrice>
        <QuoteChange>0.05</QuoteChange>
        <QuoteChange>0.09%</QuoteChange>
      </QuoteLine>
      <WatermarkBox>
        元器件
        <WatermarkPct>0.14%</WatermarkPct>
      </WatermarkBox>
    </QuoteHead>
    <BookSection $h={91}>
      {asks.map(([price, size, amount]) => (
        <OrderRow key={price} price={price} size={size} amount={amount} />
      ))}
    </BookSection>
    <BookDivider />
    <BookSection $h={93} $ruled>
      {bids.map(([price, size, amount, white]) => (
        <OrderRow key={price} price={price} size={size} amount={amount} white={white} />
      ))}
    </BookSection>
    <StatSection $h={97}>
      {stats.map(([a, av, ac, b, bv, bc]) => (
        <StatRow key={a}>
          <StatPair>
            <StatLabel>{a}</StatLabel>
            <StatValue $color={ac}>{av}</StatValue>
          </StatPair>
          <StatPair>
            <StatLabel>{b}</StatLabel>
            <StatValue $color={bc}>{bv}</StatValue>
          </StatPair>
        </StatRow>
      ))}
    </StatSection>
    <StatSection $h={60}>
      {info.map(([a, av, b, bv]) => (
        <StatRow key={a}>
          <StatPair>
            <StatLabel $size={a.length > 2 ? 14 : 15}>{a}</StatLabel>
            <StatValue>{av}</StatValue>
          </StatPair>
          <StatPair>
            <StatLabel $size={b.length > 2 ? 13 : 15}>{b}</StatLabel>
            <StatValue>{bv}</StatValue>
          </StatPair>
        </StatRow>
      ))}
    </StatSection>
    <IntradayTitle>航天电器</IntradayTitle>
    <IntradayChart />
    <SideTabs>
      {["笔", "价", "细", "势", "联", "值", "主", "筹"].map((t) => (
        <SideTab key={t} $on={t === "势"}>
          {t}
        </SideTab>
      ))}
    </SideTabs>
    <Monitor>
      <ShieldWrap>
        <Shield />
      </ShieldWrap>
      <MonitorRule $gap={3} />
      <Percent>
        27<PercentSign>%</PercentSign>
      </Percent>
      <Meter />
      <MonitorRule $gap={5} />
      <SpeedRow $top={5}>
        <SpeedArrow $color="#2a9cf0">↑</SpeedArrow>
        <SpeedValue>
          0.1
          <SpeedUnit>K/s</SpeedUnit>
        </SpeedValue>
      </SpeedRow>
      <SpeedRow $top={3}>
        <SpeedArrow $color="#18b46c">↓</SpeedArrow>
        <SpeedValue>
          0.2
          <SpeedUnit>K/s</SpeedUnit>
        </SpeedValue>
      </SpeedRow>
    </Monitor>
  </RightColumn>
);

export default function App() {
  return (
    <Page>
      <GlobalStyle />
      <TopStrip />
      <Columns>
        <WatchList />
        <CenterColumn>
          <TopBar>
            <PanelToggle>
              <PanelIcon />
            </PanelToggle>
            <PeriodList>
              {periods.map(([label, on]) => (
                <Period key={label} $on={on}>
                  {label}
                </Period>
              ))}
            </PeriodList>
            {topTools.map(([label, line], i) => (
              <ToolCell key={label} $line={line} $w={i === 8 ? 36 : 35}>
                {label}
              </ToolCell>
            ))}
          </TopBar>
          <ChartPanel $h={759}>
            <PriceChart />
            <ChartTitle $top={2}>
              航天电器(月线)
              <MenuDot />
            </ChartTitle>
          </ChartPanel>
          <ChartPanel $h={253} $ruled>
            <VolumeChart />
            <ChartTitle $top={1} $gap={4}>
              <MenuDot />
              <span>LXLZ2</span>
              <span>VVOL: -</span>
              <LegendValue>VOLUME: 925743.06</LegendValue>
              <LegendArrow>↑</LegendArrow>
            </ChartTitle>
          </ChartPanel>
          <DateRow>
            <DateCells>
              <DateCell $w={72} $pad={21}>
                2020年
              </DateCell>
              {months.map((m, i) => (
                <DateCell key={i} $w={51.9} $pad={1}>
                  {m}
                </DateCell>
              ))}
            </DateCells>
            <PeriodCell>月线</PeriodCell>
            <DateCursor>2022/12/30/五</DateCursor>
          </DateRow>
          <ToolsRow>
            {indicatorTools.map(([label, w, color]) => (
              <ToolButton key={label} $w={w} $color={color}>
                {label}
              </ToolButton>
            ))}
            <ToolFill />
            <TemplateCell $w={36} $spread={2}>
              模板
            </TemplateCell>
            <TemplateCell $w={25}>+</TemplateCell>
            <TemplateCell $w={25}>−</TemplateCell>
          </ToolsRow>
          <TableArea>
            <TableStack>
              <SectorTable />
              <SheetTabs>
                <SheetTab $on>关联品种</SheetTab>
                {sheetTabs.map((t) => (
                  <SheetTab key={t}>{t}</SheetTab>
                ))}
              </SheetTabs>
            </TableStack>
            <ScrollBar>
              <ArrowButton />
              <ScrollThumb />
              <ScrollTrack />
              <ArrowButton $down />
            </ScrollBar>
          </TableArea>
          <BottomBar>
            <BottomItem $pad={3}>扩展∨</BottomItem>
            <BottomItem $color={CYAN}>关联报价</BottomItem>
            <BottomItem $color={YELLOW}>短线基因</BottomItem>
            <BottomItem $color={RED}>财富圈</BottomItem>
            <BottomFill />
            <BottomItem $ruleLeft>新用户福利专享</BottomItem>
            <BottomItem $color={YELLOW} $pad={2}>
              图文F10
            </BottomItem>
            <BottomItem $color={YELLOW} $pad={1} $line="transparent">
              侧边栏《
            </BottomItem>
          </BottomBar>
        </CenterColumn>
        <QuotePanel />
      </Columns>
      <BottomStrip />
      <ToastMark />
      <ToastArc />
    </Page>
  );
}
